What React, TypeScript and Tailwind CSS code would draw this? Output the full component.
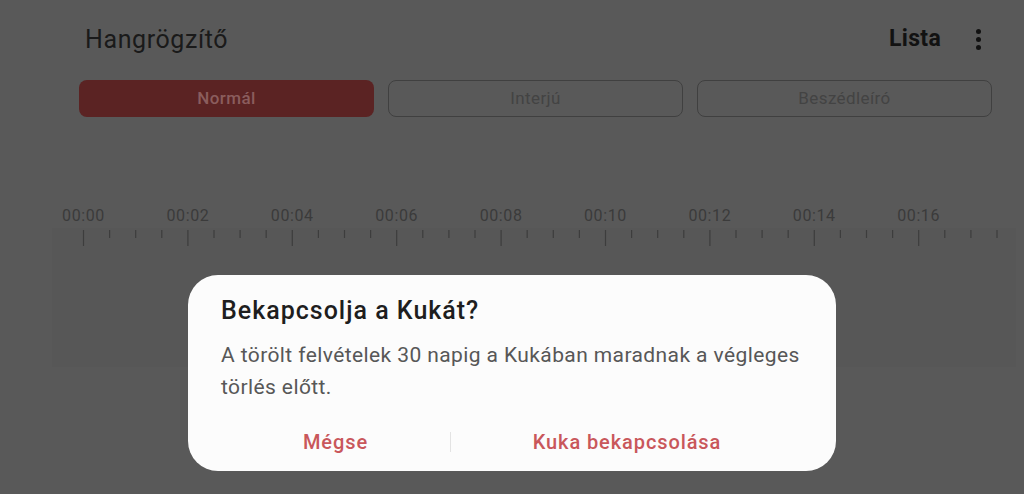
import React from "react";

const labels = ["00:00", "00:02", "00:04", "00:06", "00:08", "00:10", "00:12", "00:14", "00:16"];
const tabs = ["Normál", "Interjú", "Beszédleíró"];

const Ruler = () => {
  const ticks = Array.from({ length: 38 }, (_, i) => i);
  return (
    <svg width="964" height="20" className="block">
      {ticks.map((i) => {
        const x = 31.5 + i * 26.1;
        const major = i % 4 === 0;
        return (
          <line
            key={i}
            x1={x}
            x2={x}
            y1={2}
            y2={major ? 18 : 10}
            stroke="#3d3d3d"
            strokeWidth={1.2}
          />
        );
      })}
    </svg>
  );
};

export default function App() {
  return (
    <div
      className="relative w-[1024px] h-[494px] overflow-hidden bg-[#595959]"
      style={{ fontFamily: "Roboto, 'Noto Sans', sans-serif" }}
    >
      {/* HEADER */}
      <div className="flex items-center h-[80px] pl-[85px] pr-[43px] pb-[1px]">
        <h1 className="text-[25px] tracking-[0.6px] text-[#1a1a1a] flex-1">Hangrögzítő</h1>
        <span className="text-[23px] tracking-[0.3px] font-bold text-[#121212]">Lista</span>
        <div className="ml-[35px] flex flex-col gap-[3px] items-center">
          <span className="w-[5px] h-[5px] rounded-full bg-[#121212]" />
          <span className="w-[5px] h-[5px] rounded-full bg-[#121212]" />
          <span className="w-[5px] h-[5px] rounded-full bg-[#121212]" />
        </div>
      </div>

      {/* MODE TABS */}
      <div className="flex gap-[14px] pl-[79px] pr-[32px]">
        {tabs.map((t, i) =>
          i === 0 ? (
            <div
              key={t}
              className="w-[295px] h-[37px] rounded-[8px] bg-[#5b2323] flex items-center justify-center text-[17px] tracking-[0.4px] font-medium text-[#8a5d5d]"
            >
              {t}
            </div>
          ) : (
            <div
              key={t}
              className="w-[295px] h-[37px] rounded-[8px] border border-[#404040] flex items-center justify-center text-[17px] tracking-[0.4px] text-[#434343]"
            >
              {t}
            </div>
          )
        )}
      </div>

      {/* TIMELINE */}
      <div className="mt-[87px] pl-[52px] pr-[8px]">
        <div className="flex pl-[31.5px] h-[24px] items-center">
          {labels.map((l) => (
            <div key={l} className="w-[104.4px] shrink-0">
              <div className="w-0 flex justify-center whitespace-nowrap text-[16px] tracking-[0.6px] text-[#3b3b3b]">
                {l}
              </div>
            </div>
          ))}
        </div>
        <div className="h-[139px] bg-[#575757]">
          <Ruler />
        </div>
      </div>

      {/* DIALOG */}
      <div className="absolute inset-0 flex items-end justify-center pb-[23px]">
        <div className="w-[648px] rounded-[30px] bg-[#fcfcfc] px-[33px] pt-[20px] pb-[7px]">
          <h2 className="text-[25px] leading-[32px] tracking-[1px] font-medium text-[#1e1e1e]">
            Bekapcsolja a Kukát?
          </h2>
          <p className="mt-[12px] text-[21px] leading-[32px] tracking-[0.4px] text-[#575757]">
            A törölt felvételek 30 napig a Kukában maradnak a végleges törlés előtt.
          </p>
          <div className="mt-[17px] flex items-center h-[44px]">
            <button className="w-[229px] text-[20px] tracking-[0.9px] font-medium text-[#c9575b]">
              Mégse
            </button>
            <span className="w-px h-[20px] bg-[#e3e3e3]" />
            <button className="flex-1 text-[20px] tracking-[0.9px] font-medium text-[#c9575b]">
              Kuka bekapcsolása
            </button>
          </div>
        </div>
      </div>
    </div>
  );
}
